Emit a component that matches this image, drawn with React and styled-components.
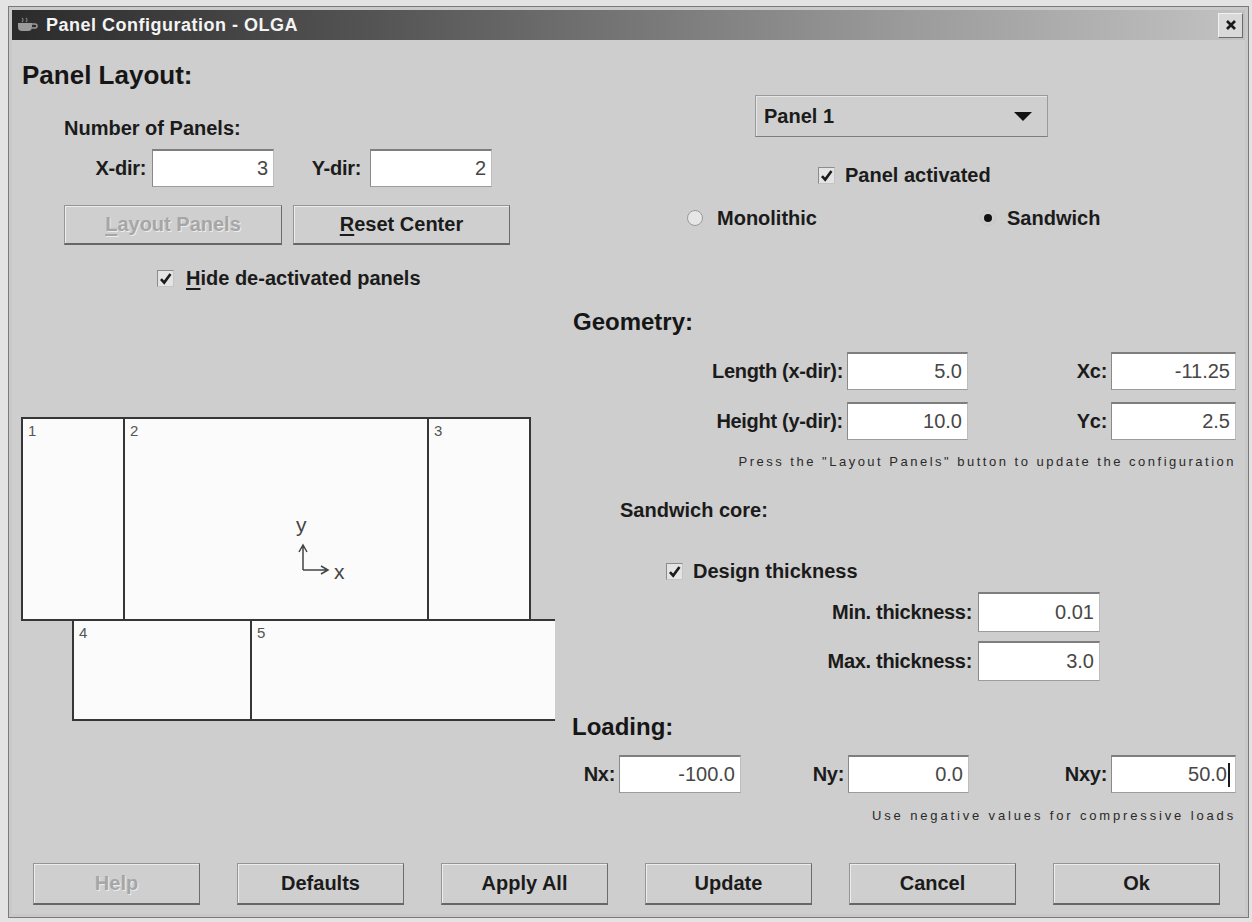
import React from "react";
import styled, { createGlobalStyle } from "styled-components";

const GlobalStyle = createGlobalStyle`
  html, body {
    margin: 0;
    padding: 0;
    background: #e3e3e3;
  }
  body {
    font-family: "Liberation Sans", Arial, sans-serif;
  }
  * {
    box-sizing: border-box;
  }
`;

const Window = styled.div`
  margin: 6px 0 0 8px;
  width: 1241px;
  height: 912px;
  border: 1px solid #7a7a7a;
  padding: 3px;
  background: #c9c9c9;
  display: flex;
  flex-direction: column;
`;

const TitleBar = styled.div`
  height: 30px;
  flex: none;
  display: flex;
  align-items: center;
  padding: 0 2px 0 4px;
  background: linear-gradient(90deg, #2b2b2b 0%, #555 30%, #9a9a9a 72%, #c2c2c2 100%);
`;

const TitleText = styled.span`
  margin-left: 6px;
  color: #f4f4f4;
  font-size: 18px;
  font-weight: bold;
  letter-spacing: 0.5px;
`;

const CloseButton = styled.div`
  margin-left: auto;
  width: 25px;
  height: 25px;
  display: flex;
  align-items: center;
  justify-content: center;
  background: #d9d9d9;
  border: 1px solid #f2f2f2;
  border-right-color: #6a6a6a;
  border-bottom-color: #6a6a6a;
`;

const Body = styled.div`
  flex: 1;
  display: grid;
  grid-template-columns: 548px 1fr;
  grid-template-rows: 810px 1fr;
  background: #cecece;
`;

const Column = styled.div`
  display: flex;
  flex-direction: column;
  min-width: 0;
`;

const Heading = styled.div`
  margin-top: ${(p) => p.$mt}px;
  padding-left: ${(p) => p.$pl}px;
  height: 30px;
  line-height: 30px;
  font-size: ${(p) => p.$size}px;
  font-weight: bold;
  color: #161616;
  white-space: nowrap;
`;

const Label = styled.div`
  margin-top: ${(p) => p.$mt || 0}px;
  padding-left: ${(p) => p.$pl || 0}px;
  height: 24px;
  line-height: 24px;
  font-size: 20px;
  font-weight: bold;
  color: #1b1b1b;
  white-space: nowrap;
`;

const Row = styled.div`
  display: flex;
  align-items: center;
  margin-top: ${(p) => p.$mt}px;
  padding-left: ${(p) => p.$pl || 0}px;
  height: ${(p) => p.$h}px;
  gap: ${(p) => p.$gap || 0}px;
`;

const FieldLabel = styled.div`
  width: ${(p) => p.$w}px;
  flex: none;
  padding-right: ${(p) => p.$pr || 4}px;
  text-align: right;
  font-size: 20px;
  font-weight: bold;
  color: #1b1b1b;
  white-space: nowrap;
  letter-spacing: -0.3px;
`;

const Field = styled.div`
  width: ${(p) => p.$w}px;
  height: 100%;
  flex: none;
  display: flex;
  align-items: center;
  justify-content: flex-end;
  padding-right: 5px;
  background: #fff;
  border: 1px solid #9c9c9c;
  border-top: 2px solid #7e7e7e;
  border-left-color: #8a8a8a;
  border-right-color: #bdbdbd;
  font-size: 20px;
  color: #474747;
`;

const Caret = styled.span`
  display: inline-block;
  width: 2px;
  height: 24px;
  margin-left: 1px;
  background: #1a1a1a;
`;

const Button = styled.button`
  width: ${(p) => p.$w}px;
  height: ${(p) => p.$h}px;
  flex: none;
  padding: 0;
  background: #cfcfcf;
  border: 1px solid #959595;
  border-right-color: #6c6c6c;
  border-bottom: 2px solid #666;
  box-shadow: inset 1px 1px 0 #ededed;
  font-family: inherit;
  font-size: 20px;
  font-weight: bold;
  color: ${(p) => (p.disabled ? "#a6a6a6" : "#1b1b1b")};
  text-shadow: ${(p) => (p.disabled ? "1px 1px 0 #ececec" : "none")};
`;

const Mnemonic = styled.span`
  text-decoration: underline;
  text-underline-offset: 3px;
`;

const Check = styled.label`
  display: flex;
  align-items: center;
  gap: ${(p) => p.$gap || 12}px;
  font-size: 20px;
  font-weight: bold;
  color: #1b1b1b;
  white-space: nowrap;
`;

const Box = styled.span`
  width: 17px;
  height: 17px;
  flex: none;
  display: flex;
  align-items: center;
  justify-content: center;
  background: #e4e4e4;
  border: 1px solid #8c8c8c;
  border-right-color: #c4c4c4;
  border-bottom-color: #c4c4c4;
`;

const Radio = styled.span`
  width: 16px;
  height: 16px;
  flex: none;
  border-radius: 50%;
  display: flex;
  align-items: center;
  justify-content: center;
  background: ${(p) => (p.$on ? "transparent" : "#e6e6e6")};
  border: 1px solid ${(p) => (p.$on ? "#c6c6c6" : "#9a9a9a")};
  &::after {
    content: "";
    width: 8px;
    height: 8px;
    border-radius: 50%;
    background: ${(p) => (p.$on ? "#111" : "transparent")};
  }
`;

const RadioItem = styled(Check)`
  width: ${(p) => p.$w}px;
`;

const Select = styled.div`
  margin-top: 55px;
  margin-left: 195px;
  width: 293px;
  height: 42px;
  display: flex;
  align-items: center;
  padding: 0 8px 0 8px;
  background: #cfcfcf;
  border: 1px solid #9a9a9a;
  border-bottom-color: #7d7d7d;
  box-shadow: inset 1px 1px 0 #e6e6e6;
  font-size: 20px;
  font-weight: bold;
  color: #1b1b1b;
`;

const Arrow = styled.span`
  margin-left: auto;
  margin-right: 7px;
  width: 0;
  height: 0;
  border-left: 9px solid transparent;
  border-right: 9px solid transparent;
  border-top: 9px solid #111;
`;

const Note = styled.div`
  margin-top: ${(p) => p.$mt}px;
  width: 676px;
  height: 20px;
  line-height: 20px;
  text-align: right;
  font-size: 13px;
  letter-spacing: ${(p) => p.$ls}px;
  color: #2a2a2a;
  white-space: nowrap;
`;

const Canvas = styled.div`
  margin-top: 10px;
  width: 543px;
  height: 540px;
  overflow: hidden;
`;

const ButtonBar = styled.div`
  grid-column: 1 / -1;
  display: flex;
  gap: 37px;
  padding: 13px 0 0 21px;
`;

const CheckMark = () => (
  <svg width="13" height="13" viewBox="0 0 12 12">
    <path d="M1.8 6.5 L4.8 9.8 L10.6 1.8" fill="none" stroke="#1c1c1c" strokeWidth="2.4" />
  </svg>
);

const CupIcon = () => (
  <svg width="24" height="16" viewBox="0 0 24 16">
    <path d="M2 6 h14 v4 a4 4 0 0 1 -4 4 h-6 a4 4 0 0 1 -4 -4 z" fill="#9a9a9a" />
    <path d="M16 7 h3 a2 2 0 0 1 0 4 h-3" fill="none" stroke="#9a9a9a" strokeWidth="1.5" />
    <path d="M6 1 q2 2 0 4 M10 1 q2 2 0 4" fill="none" stroke="#7a7a7a" strokeWidth="1.2" />
  </svg>
);

const CloseGlyph = () => (
  <svg width="12" height="12" viewBox="0 0 12 12">
    <path d="M2 2 L10 10 M10 2 L2 10" stroke="#1a1a1a" strokeWidth="2.6" />
  </svg>
);

const panels = [
  { n: 1, x: 10, y: 118, w: 102, h: 202 },
  { n: 2, x: 112, y: 118, w: 304, h: 202 },
  { n: 3, x: 416, y: 118, w: 102, h: 202 },
  { n: 4, x: 61, y: 320, w: 178, h: 100 },
  { n: 5, x: 239, y: 320, w: 312, h: 100 },
];

const PanelDrawing = () => (
  <svg width="543" height="540" viewBox="0 0 543 540">
    {panels.map((p) => (
      <g key={p.n}>
        <rect x={p.x} y={p.y} width={p.w} height={p.h} fill="#fbfbfb" stroke="#363636" strokeWidth="2" />
        <text x={p.x + 6} y={p.y + 18} fontSize="15" fill="#555" fontFamily="Liberation Sans, sans-serif">
          {p.n}
        </text>
      </g>
    ))}
    <text x="284" y="232" fontSize="21" fill="#444" fontFamily="Liberation Sans, sans-serif">y</text>
    <path d="M291 270 V246 M287 252 L291 245 L295 252" fill="none" stroke="#444" strokeWidth="1.5" />
    <path d="M291 270 H315 M309 266 L316 270 L309 274" fill="none" stroke="#444" strokeWidth="1.5" />
    <text x="322" y="279" fontSize="21" fill="#444" fontFamily="Liberation Sans, sans-serif">x</text>
  </svg>
);

const bottomButtons = [
  { text: "Help", disabled: true },
  { text: "Defaults" },
  { text: "Apply All" },
  { text: "Update" },
  { text: "Cancel" },
  { text: "Ok" },
];

export default function App() {
  return (
    <>
      <GlobalStyle />
      <Window>
        <TitleBar>
          <CupIcon />
          <TitleText>Panel Configuration - OLGA</TitleText>
          <CloseButton>
            <CloseGlyph />
          </CloseButton>
        </TitleBar>

        <Body>
          <Column>
            <Heading $mt={20} $pl={10} $size={26}>Panel Layout:</Heading>
            <Label $mt={26} $pl={52}>Number of Panels:</Label>
            <Row $mt={9} $h={38}>
              <FieldLabel $w={140} $pr={6}>X-dir:</FieldLabel>
              <Field $w={122}>3</Field>
              <FieldLabel $w={96} $pr={9}>Y-dir:</FieldLabel>
              <Field $w={122}>2</Field>
            </Row>
            <Row $mt={18} $h={40} $pl={52} $gap={11}>
              <Button $w={218} $h={40} disabled>
                <Mnemonic>L</Mnemonic>ayout Panels
              </Button>
              <Button $w={217} $h={40}>
                <Mnemonic>R</Mnemonic>eset Center
              </Button>
            </Row>
            <Row $mt={21} $h={24} $pl={145}>
              <Check>
                <Box><CheckMark /></Box>
                <span><Mnemonic>H</Mnemonic>ide de-activated panels</span>
              </Check>
            </Row>
            <Canvas>
              <PanelDrawing />
            </Canvas>
          </Column>

          <Column>
            <Select>
              Panel 1
              <Arrow />
            </Select>
            <Row $mt={26} $h={24} $pl={258}>
              <Check $gap={10}>
                <Box><CheckMark /></Box>
                Panel activated
              </Check>
            </Row>
            <Row $mt={19} $h={24} $pl={127}>
              <RadioItem $w={293} $gap={14}>
                <Radio />
                Monolithic
              </RadioItem>
              <RadioItem $w={200} $gap={11}>
                <Radio $on />
                Sandwich
              </RadioItem>
            </Row>

            <Heading $mt={77} $pl={13} $size={24}>Geometry:</Heading>
            <Row $mt={15} $h={38}>
              <FieldLabel $w={287}>Length (x-dir):</FieldLabel>
              <Field $w={121}>5.0</Field>
              <FieldLabel $w={143}>Xc:</FieldLabel>
              <Field $w={125}>-11.25</Field>
            </Row>
            <Row $mt={12} $h={38}>
              <FieldLabel $w={287}>Height (y-dir):</FieldLabel>
              <Field $w={121}>10.0</Field>
              <FieldLabel $w={143}>Yc:</FieldLabel>
              <Field $w={125}>2.5</Field>
            </Row>
            <Note $mt={12} $ls={2.5}>Press the "Layout Panels" button to update the configuration</Note>

            <Label $mt={26} $pl={60}>Sandwich core:</Label>
            <Row $mt={37} $h={24} $pl={106}>
              <Check $gap={10}>
                <Box><CheckMark /></Box>
                Design thickness
              </Check>
            </Row>
            <Row $mt={9} $h={40}>
              <FieldLabel $w={418} $pr={6}>Min. thickness:</FieldLabel>
              <Field $w={122}>0.01</Field>
            </Row>
            <Row $mt={9} $h={40}>
              <FieldLabel $w={418} $pr={6}>Max. thickness:</FieldLabel>
              <Field $w={122}>3.0</Field>
            </Row>

            <Heading $mt={31} $pl={12} $size={24}>Loading:</Heading>
            <Row $mt={13} $h={38}>
              <FieldLabel $w={59}>Nx:</FieldLabel>
              <Field $w={122}>-100.0</Field>
              <FieldLabel $w={107}>Ny:</FieldLabel>
              <Field $w={121}>0.0</Field>
              <FieldLabel $w={142}>Nxy:</FieldLabel>
              <Field $w={125}>
                50.0
                <Caret />
              </Field>
            </Row>
            <Note $mt={13} $ls={2.85}>Use negative values for compressive loads</Note>
          </Column>

          <ButtonBar>
            {bottomButtons.map((b) => (
              <Button key={b.text} $w={167} $h={42} disabled={b.disabled}>
                {b.text}
              </Button>
            ))}
          </ButtonBar>
        </Body>
      </Window>
    </>
  );
}
